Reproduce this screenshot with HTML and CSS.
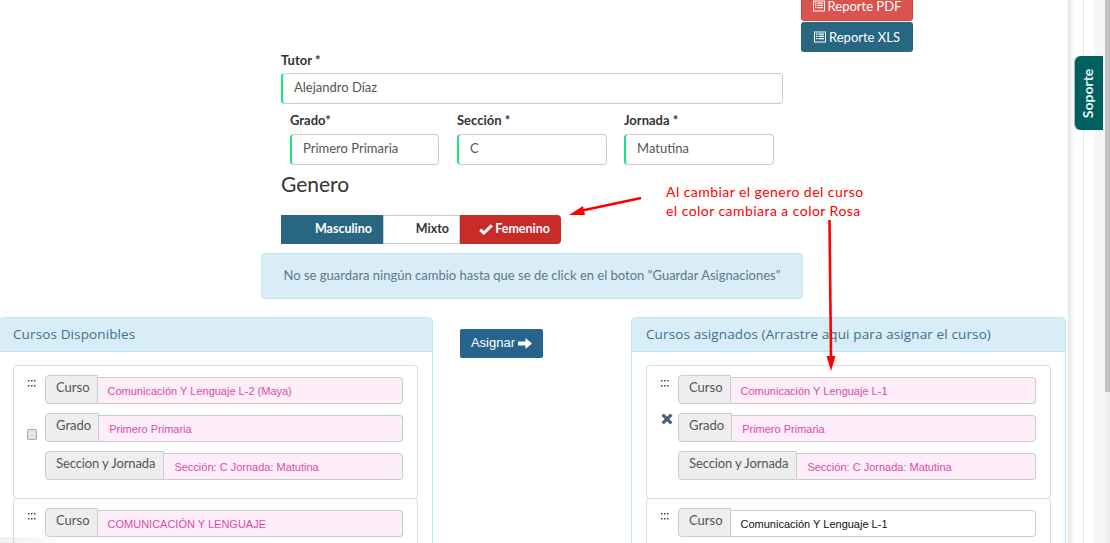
FILE: index.html
```html
<!DOCTYPE html>
<html lang="es">
<head>
<meta charset="utf-8">
<title>Asignaciones</title>
<link rel="stylesheet" href="styles.css">
</head>
<body>
<div class="page">
  <main class="main">
    <div class="reports">
      <a class="report report-pdf"><svg class="ico-list" viewBox="0 0 12 12"><path fill="#fff" fill-rule="evenodd" d="M0 .5h12v11H0zM1 1.5v9h10v-9zM2 2.5h1.600v1.200H2zM4.500 2.500H10v1.200H4.500zM2 4.800h1.600V6H2zM4.500 4.800H10V6H4.500zM2 7.100h1.600v1.200H2zM4.500 7.100H10v1.200H4.500z"/></svg>Reporte PDF</a>
      <a class="report report-xls"><svg class="ico-list" viewBox="0 0 12 12"><path fill="#fff" fill-rule="evenodd" d="M0 .5h12v11H0zM1 1.5v9h10v-9zM2 2.5h1.600v1.200H2zM4.500 2.500H10v1.200H4.500zM2 4.800h1.600V6H2zM4.500 4.800H10V6H4.500zM2 7.100h1.600v1.200H2zM4.500 7.100H10v1.200H4.500z"/></svg>Reporte XLS</a>
    </div>
    <form class="form">
      <label class="lbl lbl-tutor">Tutor *</label>
      <div class="field">Alejandro Díaz</div>
      <div class="cols">
        <div class="col"><label class="lbl">Grado*</label><div class="field">Primero Primaria</div></div>
        <div class="col"><label class="lbl">Sección *</label><div class="field">C</div></div>
        <div class="col"><label class="lbl">Jornada *</label><div class="field">Matutina</div></div>
      </div>
      <h3 class="genero">Genero</h3>
      <div class="toggle">
        <span class="tg tg-m">Masculino</span>
        <span class="tg tg-x">Mixto</span>
        <span class="tg tg-f"><svg class="ico-check" viewBox="0 0 14 11"><path fill="none" stroke="#fff" stroke-width="3" d="M1.200 5.600l3.600 3.400L12.800 1.400"/></svg>Femenino</span>
      </div>
    </form>
    <div class="alert">No se guardara ningún cambio hasta que se de click en el boton "Guardar Asignaciones"</div>
    <div class="lists">
      <section class="panel panel-left">
        <h4 class="panel-h">Cursos Disponibles</h4>
        <div class="panel-b">
          <div class="card">
            <div class="row">
              <div class="gut"><svg class="dots" viewBox="0 0 8 7"><path fill="#444" d="M0 0h1.500v1.500H0zM3 0h1.500v1.500H3zM6 0h1.500v1.500H6zM0 5h1.500v1.500H0zM3 5h1.500v1.500H3zM6 5h1.500v1.500H6z"/></svg></div>
              <div class="grp"><span class="add">Curso</span><span class="val">Comunicación Y Lenguaje L-2 (Maya)</span></div>
            </div>
            <div class="row">
              <div class="gut"><span class="chk"></span></div>
              <div class="grp"><span class="add">Grado</span><span class="val">Primero Primaria</span></div>
            </div>
            <div class="row">
              <div class="gut"></div>
              <div class="grp"><span class="add add-long">Seccion y Jornada</span><span class="val">Sección: C Jornada: Matutina</span></div>
            </div>
          </div>
          <div class="card">
            <div class="row">
              <div class="gut"><svg class="dots" viewBox="0 0 8 7"><path fill="#444" d="M0 0h1.500v1.500H0zM3 0h1.500v1.500H3zM6 0h1.500v1.500H6zM0 5h1.500v1.500H0zM3 5h1.500v1.500H3zM6 5h1.500v1.500H6z"/></svg></div>
              <div class="grp"><span class="add">Curso</span><span class="val">COMUNICACIÓN Y LENGUAJE</span></div>
            </div>
          </div>
        </div>
      </section>
      <div class="mid">
        <a class="assign">Asignar<svg class="ico-arrow" viewBox="0 0 14 11"><path fill="#fff" d="M0 3.500h7.500V0L14 5.500 7.500 11V7.500H0z"/></svg></a>
      </div>
      <section class="panel panel-right">
        <h4 class="panel-h">Cursos asignados (Arrastre aqui para asignar el curso)</h4>
        <div class="panel-b">
          <div class="card">
            <div class="row">
              <div class="gut"><svg class="dots" viewBox="0 0 8 7"><path fill="#444" d="M0 0h1.500v1.500H0zM3 0h1.500v1.500H3zM6 0h1.500v1.500H6zM0 5h1.500v1.500H0zM3 5h1.500v1.500H3zM6 5h1.500v1.500H6z"/></svg></div>
              <div class="grp"><span class="add">Curso</span><span class="val">Comunicación Y Lenguaje L-1</span></div>
            </div>
            <div class="row">
              <div class="gut"><svg class="ico-x" viewBox="0 0 12 12"><path fill="none" stroke="#4c5f75" stroke-width="3.200" d="M1.600 1.600l8.800 8.800M10.400 1.600l-8.800 8.800"/></svg></div>
              <div class="grp"><span class="add">Grado</span><span class="val">Primero Primaria</span></div>
            </div>
            <div class="row">
              <div class="gut"></div>
              <div class="grp"><span class="add add-long">Seccion y Jornada</span><span class="val">Sección: C Jornada: Matutina</span></div>
            </div>
          </div>
          <div class="card">
            <div class="row">
              <div class="gut"><svg class="dots" viewBox="0 0 8 7"><path fill="#444" d="M0 0h1.500v1.500H0zM3 0h1.500v1.500H3zM6 0h1.500v1.500H6zM0 5h1.500v1.500H0zM3 5h1.500v1.500H3zM6 5h1.500v1.500H6z"/></svg></div>
              <div class="grp"><span class="add">Curso</span><span class="val val-white">Comunicación Y Lenguaje L-1</span></div>
            </div>
          </div>
        </div>
      </section>
    </div>
  </main>
  <aside class="side">
    <div class="side-a"></div>
    <div class="side-b"></div>
    <div class="scroll"><div class="thumb"></div></div>
    <div class="soporte"><span class="soporte-t">Soporte</span></div>
  </aside>
  <p class="note">Al cambiar el genero del curso<br>el color cambiara a color Rosa</p>
  <svg class="arrows" viewBox="0 0 1110 543"><path fill="none" stroke="#f00" stroke-width="2.600" d="M641 198L580 211"/><path fill="#f00" d="M569 215l14-9 2 9z"/><path fill="none" stroke="#f00" stroke-width="2.600" d="M829.500 220L831 358"/><path fill="#f00" d="M826.500 356h9l-4.500 15z"/></svg>
  <div class="corner"></div>
</div>
</body>
</html>
```

FILE: styles.css
```css
* { box-sizing: border-box; }
html, body { margin: 0; padding: 0; background: #fff; }
body { font-family: "Lato", "Liberation Sans", sans-serif; color: #333; }
.page { position: relative; display: flex; width: 1110px; height: 543px; overflow: hidden; }
.main { width: 1068px; flex: none; }

.reports { display: flex; flex-direction: column; align-items: flex-start; margin: -9px 0 0 801px; }
.report { display: flex; align-items: center; justify-content: center; width: 112px; height: 30px; color: #fff; font-size: 13px; border-radius: 3px; }
.report-pdf { background: #d9534f; border: 1px solid #d43f3a; margin-bottom: 1px; }
.report-xls { background: #286682; }
.ico-list { width: 12px; height: 12px; margin-right: 3px; }

.form { width: 502px; margin: 0 0 0 281px; }
.lbl { display: block; font-size: 13px; font-weight: 700; color: #333; line-height: 16px; }
.lbl-tutor { height: 21px; }
.field { height: 31px; border: 1px solid #ccc; border-left: 2px solid #1de27c; border-radius: 4px; padding: 0 11px; font-size: 13px; line-height: 27px; color: #555; background: #fff; }
.cols { display: grid; grid-template-columns: repeat(3, 167px); margin-left: 9px; margin-top: 8px; }
.col .lbl { height: 22px; }
.col .field { width: 150px; }
.col:first-child .field { width: 149px; }
.genero { margin: 6px 0 0; font-size: 21px; line-height: 26px; font-weight: 400; color: #333; }
.toggle { display: flex; margin-top: 18px; height: 29px; width: 280px; font-size: 12.500px; font-weight: 700; }
.tg { display: flex; align-items: center; justify-content: flex-end; height: 29px; padding-bottom: 2px; }
.tg-m { width: 102px; background: #286682; color: #fff; padding-right: 11px; }
.tg-x { width: 77px; border: 1px solid #ccc; background: #fff; color: #333; padding-right: 10px; }
.tg-f { width: 101px; background: #c72c28; color: #fff; padding-right: 11px; border-radius: 0 4px 4px 0; }
.ico-check { width: 14px; height: 11px; margin-right: 2px; margin-top: 2px; }

.alert { width: 542px; height: 46px; margin: 9px 0 0 261px; background: #d9edf7; border: 1px solid #bce8f1; border-radius: 4px; color: #5b7a8c; font-size: 13px; line-height: 42px; text-align: center; }

.lists { display: flex; margin-top: 18px; align-items: flex-start; }
.panel { flex: none; border: 1px solid #bce8f1; border-radius: 4px 4px 0 0; background: #fff; height: 300px; }
.panel-left { width: 434px; margin-left: -1px; }
.panel-right { width: 435px; }
.panel-h { margin: 0; height: 34px; padding: 0 14px; background: #d9edf7; border-bottom: 1px solid #bce8f1; color: #3f6f8c; font-family: "Open Sans", "Liberation Sans", sans-serif; font-size: 13.500px; font-weight: 400; line-height: 33px; letter-spacing: .12px; }
.panel-left .panel-h { padding-left: 13px; }
.panel-b { padding: 13px 13px 0 14px; }
.panel-left .panel-b { padding-left: 13px; }
.card { width: 405px; height: 134px; border: 1px solid #ddd; border-radius: 4px; padding: 9px 14px 0 0; background: #fff; }
.card + .card { margin-top: -1px; }
.row { display: flex; margin-bottom: 9px; }
.gut { width: 31px; flex: none; position: relative; }
.dots { position: absolute; left: 14px; top: 5px; width: 8px; height: 7px; }
.chk { position: absolute; left: 13px; top: 16px; width: 10px; height: 11px; border: 1px solid #aaa; border-radius: 2px; background: #e4e4e4; }
.ico-x { position: absolute; left: 14px; top: 0; width: 12px; height: 12px; }
.grp { display: flex; width: 358px; height: 29px; align-items: flex-start; }
.add { flex: none; height: 29px; padding: 0 7px 0 10px; background: #eee; border: 1px solid #ccc; border-radius: 4px 0 0 4px; color: #555; font-size: 13px; line-height: 23px; }
.add-long { letter-spacing: -.1px; padding-right: 8px; }
.val { flex: 1; height: 27px; margin-top: 2px; padding: 0 9px 0 10px; background: #fdeef9; border: 1px solid #ccc; border-left: 0; border-radius: 0 4px 4px 0; color: #dd4aa8; font-family: "Liberation Sans", Arial, sans-serif; font-size: 11px; line-height: 26px; white-space: nowrap; }
.val-white { background: #fff; color: #111; }

.mid { flex: none; width: 198px; padding: 12px 0 0 27px; }
.assign { display: flex; align-items: center; justify-content: center; width: 83px; height: 29px; background: #26648e; border-radius: 2px; color: #fff; font-family: "Liberation Sans", Arial, sans-serif; font-size: 13px; padding-bottom: 2px; }
.ico-arrow { width: 14px; height: 11px; margin-left: 3px; margin-top: 2px; }

.side { flex: none; width: 42px; height: 543px; display: flex; position: relative; }
.side-a { width: 16px; border-right: 1px solid #e3e8ef; background: linear-gradient(to right, #e4e4e4, #fff 6px); }
.side-b { width: 21px; background: linear-gradient(to right, #fff 10px, #f6f6f6 10px); }
.scroll { width: 5px; background: #f1f1f1; }
.thumb { height: 392px; background: #c1c1c1; }
.soporte { position: absolute; left: 7px; top: 56px; width: 28px; height: 74px; background: #00605f; border-radius: 6px 0 0 6px; display: flex; align-items: center; justify-content: center; box-shadow: -1px 0 1px #9bb; }
.soporte-t { transform: rotate(-90deg); color: #e6f2f0; font-size: 14px; font-weight: 700; white-space: nowrap; margin-left: -2px; }

.note { position: absolute; left: 666px; top: 182px; margin: 0; color: #f00; font-family: "Lato", "Liberation Sans", sans-serif; font-size: 14px; line-height: 19px; letter-spacing: .45px; }
.arrows { position: absolute; left: 0; top: 0; width: 1110px; height: 543px; pointer-events: none; }
.corner { position: absolute; left: 0; top: 537px; width: 70px; height: 6px; background: linear-gradient(to right, rgba(0,0,0,.06), rgba(0,0,0,0)); }
```
